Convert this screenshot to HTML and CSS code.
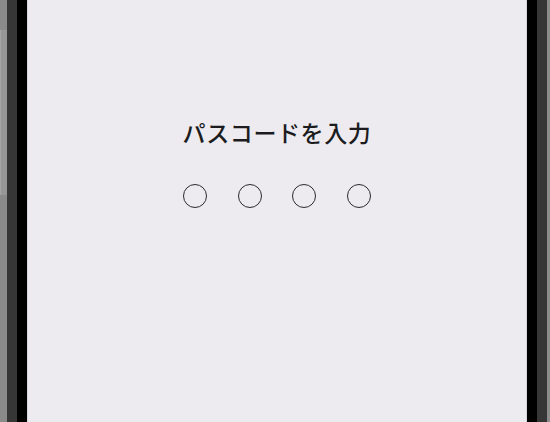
FILE: index.html
```html
<!DOCTYPE html>
<html lang="ja">
<head>
<meta charset="utf-8">
<link rel="stylesheet" href="styles.css">
</head>
<body>
<div class="device">
  <div class="edge edge-left">
    <div class="btn btn-a"></div>
  </div>
  <div class="bezel-gray"></div>
  <div class="bezel-black"></div>
  <div class="screen">
    <h1 class="title">パスコードを入力</h1>
    <div class="dots">
      <span class="dot"></span>
      <span class="dot"></span>
      <span class="dot"></span>
      <span class="dot"></span>
    </div>
  </div>
  <div class="bezel-black"></div>
  <div class="bezel-gray"></div>
  <div class="edge edge-right"></div>
</div>
</body>
</html>
```
FILE: styles.css
```css
html, body {
  margin: 0;
  padding: 0;
  width: 550px;
  height: 422px;
  overflow: hidden;
  background: #edebf0;
}
.device {
  display: flex;
  width: 550px;
  height: 422px;
}
.edge {
  flex: 0 0 7px;
  background: #8a8a8a;
  display: flex;
  flex-direction: column;
}
.edge-left {
  padding-top: 30px;
}
.edge-left .btn-a {
  height: 165px;
  background: #979797;
  border-left: 1px solid #a6a6a6;
}
.edge-right {
  flex: 0 0 3px;
  background: #8c8c8c;
}
.bezel-gray {
  flex: 0 0 10px;
  background: #363636;
}
.bezel-black {
  flex: 0 0 10px;
  background: #000;
}
.screen {
  flex: 1;
  background: #edebf0;
  border-left: 1px solid #d8d6dc;
  border-right: 1px solid #d8d6dc;
  display: flex;
  flex-direction: column;
  align-items: center;
  padding-top: 117px;
}
.title {
  margin: 0;
  font-family: "Noto Sans CJK JP", "Noto Sans", sans-serif;
  font-weight: 500;
  font-size: 23px;
  line-height: 30px;
  color: #1c1c1e;
  letter-spacing: 0.6px;
}
.dots {
  display: flex;
  gap: 30.5px;
  margin-top: 37px;
}
.dot {
  box-sizing: border-box;
  width: 24px;
  height: 24px;
  border: 1.4px solid #2a2a2c;
  border-radius: 50%;
}
```
